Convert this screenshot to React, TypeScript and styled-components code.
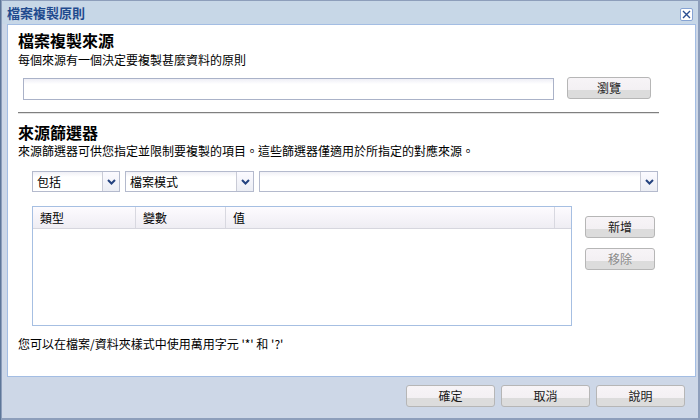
import React from 'react';
import styled, { createGlobalStyle } from 'styled-components';

const GlobalStyle = createGlobalStyle`
  html, body { margin: 0; padding: 0; }
  body {
    width: 700px;
    height: 420px;
    overflow: hidden;
    background: #5d7699;
    font-family: 'Noto Sans CJK TC', 'Liberation Sans', sans-serif;
    font-size: 12px;
    color: #000;
  }
`;

const Frame = styled.div`
  box-sizing: border-box;
  margin-left: 1px;
  width: 699px;
  height: 420px;
  display: flex;
  flex-direction: column;
  background: #cdd7e7;
  border-style: solid;
  border-color: #8d9ebb;
  border-width: 1px 2px 2px 1px;
`;

const TitleBar = styled.div`
  height: 23px;
  display: flex;
  align-items: center;
  justify-content: space-between;
  padding: 0 5px 0 5px;
  background: #c7d7e7;
`;

const Title = styled.div`
  font-size: 13px;
  font-weight: bold;
  color: #1f4a8e;
  line-height: 16px;
`;

const CloseBox = styled.div`
  box-sizing: border-box;
  width: 13px;
  height: 13px;
  margin-top: 4px;
  border: 1px solid #86a3d3;
  border-radius: 2px;
  background: #fff;
  display: flex;
  align-items: center;
  justify-content: center;
`;

const Panel = styled.div`
  box-sizing: border-box;
  margin-left: 5px;
  width: 689px;
  height: 353px;
  background: #fff;
  border: 1px solid #a3bde3;
  padding: 5px 0 0 10px;
  display: flex;
  flex-direction: column;
`;

const Heading = styled.div`
  font-size: 16px;
  font-weight: bold;
  line-height: 20px;
`;

const Text = styled.div<{ $top?: number }>`
  font-size: 12px;
  line-height: 16px;
  margin-top: ${(p) => p.$top ?? 0}px;
`;

const InputRow = styled.div`
  display: flex;
  align-items: flex-start;
  margin: 10px 0 0 5px;
  gap: 13px;
`;

const TextInput = styled.div<{ $w: number }>`
  box-sizing: border-box;
  width: ${(p) => p.$w}px;
  height: 22px;
  border: 1px solid #aab2c8;
  background: linear-gradient(#eeeef6 0, #ffffff 5px);
`;

const Btn = styled.div<{ $w: number; $disabled?: boolean }>`
  box-sizing: border-box;
  width: ${(p) => p.$w}px;
  height: 22px;
  border: 1px solid #b6b6b6;
  border-radius: 3px;
  background: linear-gradient(#f7f4f7 0, #f3f0f3 60%, #dcdcdc 60%, #dcdcdc 100%);
  display: flex;
  align-items: center;
  justify-content: center;
  font-size: 12px;
  line-height: 16px;
  color: ${(p) => (p.$disabled ? '#8a8a8a' : '#1a1a1a')};
`;

const Divider = styled.div`
  width: 641px;
  margin-top: 12px;
  border-top: 1px solid #7f7f7f;
  border-bottom: 1px solid #e2e2e2;
`;

const SelectRow = styled.div`
  display: flex;
  gap: 5px;
  margin: 12px 0 0 14px;
`;

const Select = styled.div<{ $w: number }>`
  box-sizing: border-box;
  width: ${(p) => p.$w}px;
  height: 21px;
  border: 1px solid #b4bacd;
  background: linear-gradient(#f0f0f6 0, #ffffff 5px);
  display: flex;
  align-items: stretch;
`;

const SelectValue = styled.div`
  flex: 1;
  padding-left: 4px;
  display: flex;
  align-items: center;
  line-height: 16px;
`;

const ArrowPart = styled.div`
  width: 16px;
  border-left: 1px solid #c9cbd6;
  background: linear-gradient(#fbfaff, #eceef4);
  display: flex;
  align-items: center;
  justify-content: center;
`;

const TableArea = styled.div`
  display: flex;
  align-items: flex-start;
  gap: 13px;
  margin: 14px 0 0 14px;
`;

const Table = styled.div`
  box-sizing: border-box;
  width: 540px;
  height: 120px;
  border: 1px solid #a6bfe2;
`;

const HeaderRow = styled.div`
  display: flex;
  height: 21px;
  background: linear-gradient(#fdfbfe, #f6f4f9 50%, #eeedf3);
  border-bottom: 1px solid #d6d6de;
`;

const HeaderCell = styled.div<{ $w: number; $last?: boolean }>`
  box-sizing: border-box;
  width: ${(p) => p.$w}px;
  padding-left: 7px;
  display: flex;
  align-items: center;
  line-height: 16px;
  border-right: ${(p) => (p.$last ? 'none' : '1px solid #d8d8e0')};
`;

const SideButtons = styled.div`
  display: flex;
  flex-direction: column;
  gap: 10px;
  margin-top: 10px;
`;

const Footer = styled.div`
  display: flex;
  justify-content: flex-end;
  gap: 6px;
  padding: 8px 13px 0 0;
`;

const Chevron = () => (
  <svg width="9" height="6" viewBox="0 0 9 6">
    <polyline points="1,1 4.5,4.5 8,1" fill="none" stroke="#24437f" strokeWidth="2" />
  </svg>
);

const DropDown = ({ w, value }: { w: number; value?: string }) => (
  <Select $w={w}>
    <SelectValue>{value}</SelectValue>
    <ArrowPart>
      <Chevron />
    </ArrowPart>
  </Select>
);

function App() {
  return (
    <>
      <GlobalStyle />
      <Frame>
        <TitleBar>
          <Title>檔案複製原則</Title>
          <CloseBox>
            <svg width="9" height="9" viewBox="0 0 9 9">
              <path d="M1 1L8 8M8 1L1 8" stroke="#2a4e92" strokeWidth="1.4" />
            </svg>
          </CloseBox>
        </TitleBar>
        <Panel>
          <Heading>檔案複製來源</Heading>
          <Text $top={2}>每個來源有一個決定要複製甚麼資料的原則</Text>
          <InputRow>
            <TextInput $w={531} />
            <div style={{ marginTop: -1 }}>
              <Btn $w={84}>瀏覽</Btn>
            </div>
          </InputRow>
          <Divider />
          <Heading style={{ marginTop: 8 }}>來源篩選器</Heading>
          <Text $top={1}>來源篩選器可供您指定並限制要複製的項目。這些篩選器僅適用於所指定的對應來源。</Text>
          <SelectRow>
            <DropDown w={88} value="包括" />
            <DropDown w={129} value="檔案模式" />
            <DropDown w={399} />
          </SelectRow>
          <TableArea>
            <Table>
              <HeaderRow>
                <HeaderCell $w={103}>類型</HeaderCell>
                <HeaderCell $w={90}>變數</HeaderCell>
                <HeaderCell $w={329}>值</HeaderCell>
                <HeaderCell $w={16} $last />
              </HeaderRow>
            </Table>
            <SideButtons>
              <Btn $w={70}>新增</Btn>
              <Btn $w={70} $disabled>
                移除
              </Btn>
            </SideButtons>
          </TableArea>
          <Text $top={10}>您可以在檔案/資料夾樣式中使用萬用字元 '*' 和 '?'</Text>
        </Panel>
        <Footer>
          <Btn $w={89}>確定</Btn>
          <Btn $w={89}>取消</Btn>
          <Btn $w={89}>說明</Btn>
        </Footer>
      </Frame>
    </>
  );
}

export default App;
